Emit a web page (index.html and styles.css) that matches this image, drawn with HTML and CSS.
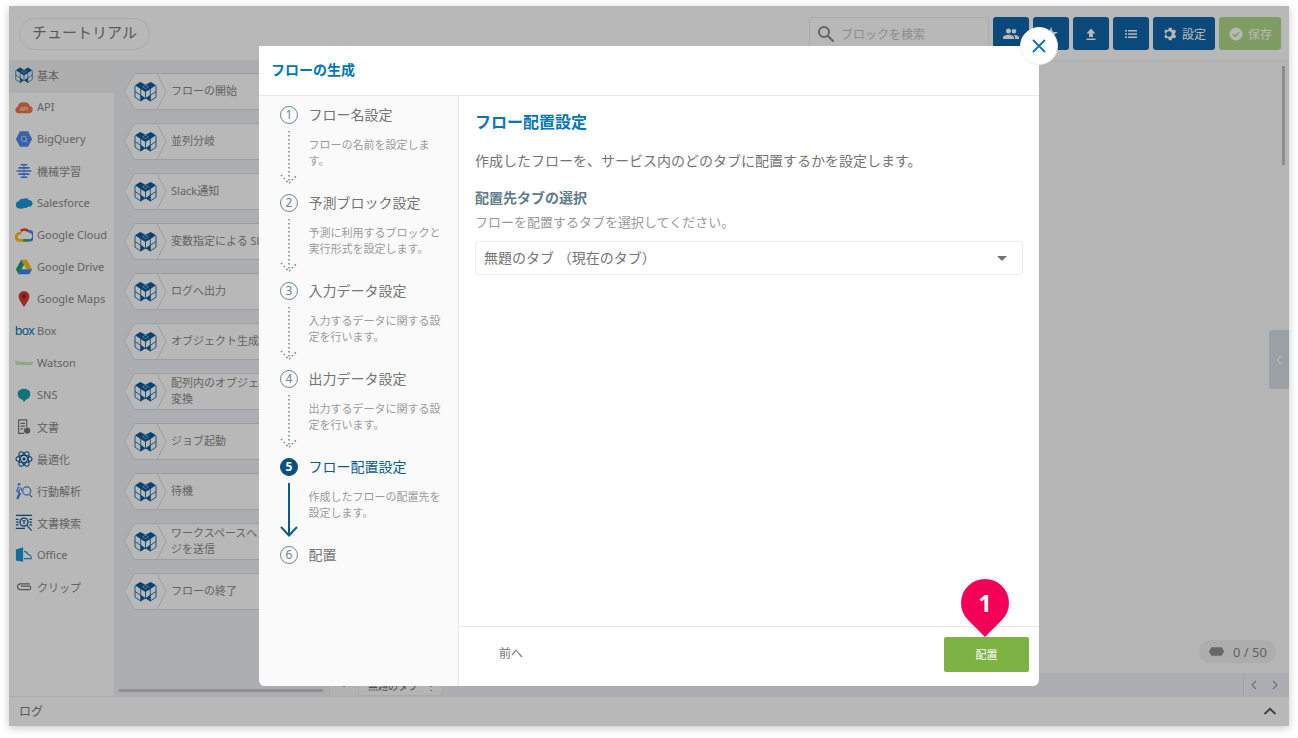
FILE: index.html
```html
<!DOCTYPE html>
<html lang="ja">
<head>
<meta charset="utf-8">
<title>フローの生成</title>
<link rel="stylesheet" href="styles.css">
</head>
<body>
<svg class="defs" width="0" height="0">
  <symbol id="cube" viewBox="0 0 24 22">
    <path d="M1 5v12l6 4v-9M23 5v12l-6 4v-9M1 11l6 4M23 11l-6 4M7 8v4M17 8v4M12 10v9" fill="none" stroke="#1f6ea6" stroke-width="1"/>
    <path d="M1 4.500L6.500 1l5.500 3 5.500-3L23 4.500 17.500 8 12 11.500 6.500 8z" fill="#0b5c9c"/>
    <path d="M12 4l-3 2 3 2 3-2z" fill="#0b5c9c" stroke="#fff" stroke-width=".5"/>
    <path d="M7 14.500l5 3.500-5 3.500zM17 14.500L12 18l5 3.500z" fill="#0b5c9c"/>
  </symbol>
</svg>
<div class="app">
  <header class="topbar">
    <div class="title-pill">チュートリアル</div>
    <div class="top-actions">
      <div class="search">
        <svg class="search-icon" viewBox="0 0 18 18"><circle cx="7" cy="7" r="5" fill="none" stroke="#8a8a8a" stroke-width="2"/><path d="M11 11l5.500 5.500" stroke="#8a8a8a" stroke-width="2.200"/></svg>
        <span>ブロックを検索</span>
      </div>
      <button class="tbtn"><svg viewBox="0 0 16 16" class="ico"><path d="M5.500 7.500a2.500 2.500 0 1 0 0-5 2.500 2.500 0 0 0 0 5zm5.500 0a2.300 2.300 0 1 0 0-4.600 2.300 2.300 0 0 0 0 4.600zM0 13v-1.500C0 9.800 3.500 8.800 5.500 8.800s5.500 1 5.500 2.700V13zm12 0v-1.500c0-1-.5-1.800-1.300-2.500 2 0 5.300.8 5.300 2.500V13z" fill="#fff"/></svg></button>
      <button class="tbtn"><svg viewBox="0 0 16 16" class="ico"><path d="M8 1l2 5h5l-4 3 1.500 5L8 11l-4.500 3L5 9 1 6h5z" fill="#fff"/></svg></button>
      <button class="tbtn"><svg viewBox="0 0 16 16" class="ico"><path d="M8 2.500l4.500 5H10V11H6V7.500H3.500zM3.500 12.500h9V14h-9z" fill="#fff"/></svg></button>
      <button class="tbtn"><svg viewBox="0 0 16 16" class="ico"><path d="M2 4h2v1.500H2zM5 4h9v1.500H5zM2 7.250h2v1.500H2zM5 7.250h9v1.500H5zM2 10.500h2V12H2zM5 10.500h9V12H5z" fill="#fff"/></svg></button>
      <button class="tbtn wide"><svg viewBox="0 0 16 16" class="ico"><path d="M8 5.300a2.700 2.700 0 1 0 0 5.400 2.700 2.700 0 0 0 0-5.400zm5.800 3.600l1.400 1.100-1.400 2.500-1.700-.7c-.4.300-.8.500-1.200.7L10.600 14.300H7.800l-.3-1.800c-.4-.2-.8-.4-1.200-.7l-1.700.7L3.200 10l1.400-1.100a5 5 0 0 1 0-1.800L3.200 6l1.400-2.500 1.700.7c.4-.3.800-.5 1.200-.7l.3-1.800h2.800l.3 1.800c.4.200.8.400 1.200.7l1.700-.7L15.200 6l-1.400 1.100c.1.600.1 1.200 0 1.800z" fill="#fff" transform="translate(-1)"/></svg><span>設定</span></button>
      <button class="tbtn wide save"><svg viewBox="0 0 16 16" class="ico"><circle cx="8" cy="8" r="6.500" fill="#fff"/><path d="M4.800 8l2.300 2.300 4-4" fill="none" stroke="#b0d989" stroke-width="1.600"/></svg><span>保存</span></button>
    </div>
  </header>
  <div class="main">
    <nav class="side">
      <div class="cat active"><svg class="cat-ico" viewBox="0 0 24 22"><use href="#cube"/></svg><span>基本</span></div>
      <div class="cat"><svg class="cat-ico" viewBox="0 0 20 16"><path d="M4 15a3.800 3.800 0 0 1-1-7.400A5.500 5.500 0 0 1 10 3a5 5 0 0 1 6.500 3.800A4.200 4.200 0 0 1 16 15z" fill="#f2734a"/><text class="api-t" x="10" y="13">API</text></svg><span>API</span></div>
      <div class="cat"><svg class="cat-ico" viewBox="0 0 20 20"><path d="M5.500 1.500h9L19 10l-4.500 8.500h-9L1 10z" fill="#5085ee"/><circle cx="9.800" cy="9.800" r="3" fill="none" stroke="#d6e4ff" stroke-width="1"/><path d="M12 12l2 2" stroke="#d6e4ff"/></svg><span>BigQuery</span></div>
      <div class="cat"><svg class="cat-ico" viewBox="0 0 20 20"><path d="M7 3h6M4.500 6.500h11M2.500 10h15M4.500 13.500h11M7 17h6" fill="none" stroke="#4a80e8" stroke-width="1.800" stroke-linecap="round"/><path d="M10 2v16" stroke="#4a80e8" stroke-width="1"/></svg><span>機械学習</span></div>
      <div class="cat"><svg class="cat-ico" viewBox="0 0 20 14"><path d="M5 13C2.500 13 1 11.500 1 9.500 .5 7 2 5.500 4 5c1-2 3.500-3.500 5.500-2.500C11 1.500 14 1.500 15 3.500c3 .2 4.500 2 4.500 4 0 2.500-2 4-4.500 3.500-1 1.500-3 2-4.500 1.200C9 13.500 6.500 13.800 5 13z" fill="#1798d8"/></svg><span>Salesforce</span></div>
      <div class="cat"><svg class="cat-ico" viewBox="0 0 20 16"><path d="M6.500 3.500A5.800 5.800 0 0 1 15 4" fill="none" stroke="#ea4335" stroke-width="3"/><path d="M15 4a5 5 0 0 1 1 10" fill="none" stroke="#4285f4" stroke-width="3"/><path d="M16 14H9" stroke="#34a853" stroke-width="3"/><path d="M9 14H5A3.800 3.800 0 0 1 3 7a4 4 0 0 1 4-1" fill="none" stroke="#fbbc05" stroke-width="3"/></svg><span>Google Cloud</span></div>
      <div class="cat"><svg class="cat-ico" viewBox="0 0 20 18"><path d="M7 1h6l6 10.500h-6z" fill="#fbbc05"/><path d="M7 1l3 5.500L4 17 1 11.500z" fill="#1aa260"/><path d="M6.500 11.500H19L16 17H3.800z" fill="#4285f4"/></svg><span>Google Drive</span></div>
      <div class="cat"><svg class="cat-ico" viewBox="0 0 20 20"><path d="M10 1a6 6 0 0 0-6 6c0 4 6 12 6 12s6-8 6-12a6 6 0 0 0-6-6z" fill="#d93a32"/><circle cx="10" cy="7" r="2.200" fill="#8c2420"/></svg><span>Google Maps</span></div>
      <div class="cat"><span class="box-logo">box</span><span>Box</span></div>
      <div class="cat"><span class="watson-logo">Watson</span><span>Watson</span></div>
      <div class="cat"><svg class="cat-ico" viewBox="0 0 20 20"><path d="M10 3c4.500 0 7 2.500 7 6s-2.500 6-5 6.300L10 18l-1.500-2.700C5.500 15 3 12.500 3 9s2.500-6 7-6z" fill="#15a0a8"/></svg><span>SNS</span></div>
      <div class="cat"><svg class="cat-ico" viewBox="0 0 20 20"><path d="M4 2h9v8M4 2v15h6M6 6h5M6 9h5M6 12h3" fill="none" stroke="#777" stroke-width="1.300"/><circle cx="13.500" cy="14" r="3.500" fill="#777"/></svg><span>文書</span></div>
      <div class="cat"><svg class="cat-ico" viewBox="0 0 20 20"><g fill="none" stroke="#0f5c9a" stroke-width="1.200"><ellipse cx="10" cy="10" rx="9" ry="4"/><ellipse cx="10" cy="10" rx="9" ry="4" transform="rotate(60 10 10)"/><ellipse cx="10" cy="10" rx="9" ry="4" transform="rotate(120 10 10)"/></g><circle cx="10" cy="10" r="1.800" fill="#0f5c9a"/></svg><span>最適化</span></div>
      <div class="cat"><svg class="cat-ico" viewBox="0 0 20 20"><circle cx="4.500" cy="2.500" r="1.500" fill="#4a80e8"/><path d="M4 5L2 10l4 3-3 6M5 8l-1 6-2 5M6 6l2 4" fill="none" stroke="#4a80e8" stroke-width="1.400"/><circle cx="13" cy="10" r="4.500" fill="none" stroke="#4a80e8" stroke-width="1.300"/><path d="M16 14l3 3" stroke="#4a80e8" stroke-width="1.400"/></svg><span>行動解析</span></div>
      <div class="cat"><svg class="cat-ico" viewBox="0 0 20 20"><path d="M1 1.500h18M1 16h10M1 6h3M16 6h3M1 9h3M16 9h3M1 12h3M16 12h3" stroke="#0f5c9a" stroke-width="1.500"/><circle cx="10" cy="9" r="4.500" fill="none" stroke="#0f5c9a" stroke-width="1.500"/><path d="M8 7.500h4M10 7.500v4M13.500 13l5 5.500" stroke="#0f5c9a" stroke-width="1.300"/></svg><span>文書検索</span></div>
      <div class="cat"><svg class="cat-ico" viewBox="0 0 20 20"><path d="M1 4l8-2.500v16L1 16z" fill="#1798d8"/><path d="M10 6c3 0 4 2 4.500 3.500C17 10 18.500 11.500 18 14H10" fill="none" stroke="#1798d8" stroke-width="1.200"/></svg><span>Office</span></div>
      <div class="cat"><svg class="cat-ico" viewBox="0 0 20 14"><path d="M17 4H6a3.300 3.300 0 0 0 0 6.500h10a2 2 0 0 0 0-4H7" fill="none" stroke="#777" stroke-width="1.300" transform="translate(-.5 -.5)"/></svg><span>クリップ</span></div>
    </nav>
    <section class="palette">
      <div class="tiles">
        <div class="tile"><svg class="hex" viewBox="0 0 33 37"><path class="hex-shape" d="M.5 18.500L10.500.5h22.500l9 18-9 18H10.500z"/><use href="#cube" x="10" y="8" width="23" height="21"/></svg><div class="tile-label"><span>フローの開始</span></div></div>
        <div class="tile"><svg class="hex" viewBox="0 0 33 37"><path class="hex-shape" d="M.5 18.500L10.500.5h22.500l9 18-9 18H10.500z"/><use href="#cube" x="10" y="8" width="23" height="21"/></svg><div class="tile-label"><span>並列分岐</span></div></div>
        <div class="tile"><svg class="hex" viewBox="0 0 33 37"><path class="hex-shape" d="M.5 18.500L10.500.5h22.500l9 18-9 18H10.500z"/><use href="#cube" x="10" y="8" width="23" height="21"/></svg><div class="tile-label"><span>Slack通知</span></div></div>
        <div class="tile"><svg class="hex" viewBox="0 0 33 37"><path class="hex-shape" d="M.5 18.500L10.500.5h22.500l9 18-9 18H10.500z"/><use href="#cube" x="10" y="8" width="23" height="21"/></svg><div class="tile-label"><span>変数指定による Slack通知</span></div></div>
        <div class="tile"><svg class="hex" viewBox="0 0 33 37"><path class="hex-shape" d="M.5 18.500L10.500.5h22.500l9 18-9 18H10.500z"/><use href="#cube" x="10" y="8" width="23" height="21"/></svg><div class="tile-label"><span>ログへ出力</span></div></div>
        <div class="tile"><svg class="hex" viewBox="0 0 33 37"><path class="hex-shape" d="M.5 18.500L10.500.5h22.500l9 18-9 18H10.500z"/><use href="#cube" x="10" y="8" width="23" height="21"/></svg><div class="tile-label"><span>オブジェクト生成</span></div></div>
        <div class="tile"><svg class="hex" viewBox="0 0 33 37"><path class="hex-shape" d="M.5 18.500L10.500.5h22.500l9 18-9 18H10.500z"/><use href="#cube" x="10" y="8" width="23" height="21"/></svg><div class="tile-label"><span>配列内のオブジェクトを<br>変換</span></div></div>
        <div class="tile"><svg class="hex" viewBox="0 0 33 37"><path class="hex-shape" d="M.5 18.500L10.500.5h22.500l9 18-9 18H10.500z"/><use href="#cube" x="10" y="8" width="23" height="21"/></svg><div class="tile-label"><span>ジョブ起動</span></div></div>
        <div class="tile"><svg class="hex" viewBox="0 0 33 37"><path class="hex-shape" d="M.5 18.500L10.500.5h22.500l9 18-9 18H10.500z"/><use href="#cube" x="10" y="8" width="23" height="21"/></svg><div class="tile-label"><span>待機</span></div></div>
        <div class="tile"><svg class="hex" viewBox="0 0 33 37"><path class="hex-shape" d="M.5 18.500L10.500.5h22.500l9 18-9 18H10.500z"/><use href="#cube" x="10" y="8" width="23" height="21"/></svg><div class="tile-label"><span>ワークスペースへメッセー<br>ジを送信</span></div></div>
        <div class="tile"><svg class="hex" viewBox="0 0 33 37"><path class="hex-shape" d="M.5 18.500L10.500.5h22.500l9 18-9 18H10.500z"/><use href="#cube" x="10" y="8" width="23" height="21"/></svg><div class="tile-label"><span>フローの終了</span></div></div>
      </div>
      <div class="pal-scroll"></div>
    </section>
    <section class="canvas-wrap">
      <div class="canvas">
        <div class="v-scroll"></div>
        <div class="handle"><svg viewBox="0 0 8 10" class="handle-ico"><path d="M6 1L2 5l4 4" fill="none" stroke="#fff" stroke-width="1.200"/></svg></div>
        <div class="counter"><svg viewBox="0 0 20 12" class="counter-ico"><path d="M4 1h12l3 5-3 5H4L1 6z" fill="#8f8f8f"/></svg><span>0 / 50</span></div>
      </div>
      <div class="tabbar">
        <div class="tab-add">+</div>
        <div class="tab">無題のタブ<span class="tab-menu">⋮</span></div>
        <div class="tab-fill"></div>
        <div class="tab-nav"><svg viewBox="0 0 8 10"><path d="M6 1L2 5l4 4" fill="none" stroke="#999" stroke-width="1.100"/></svg><svg viewBox="0 0 8 10"><path d="M2 1l4 4-4 4" fill="none" stroke="#999" stroke-width="1.100"/></svg></div>
      </div>
    </section>
  </div>
  <footer class="logbar"><span>ログ</span><svg viewBox="0 0 14 8" class="log-chev"><path d="M1.500 7L7 1.800 12.500 7" fill="none" stroke="#fff" stroke-width="2"/></svg></footer>

  <div class="overlay">
    <div class="modal">
      <button class="close"><svg viewBox="0 0 16 16"><path d="M2 2l12 12M14 2L2 14" stroke="#0277bd" stroke-width="1.800"/></svg></button>
      <div class="modal-head">フローの生成</div>
      <div class="modal-body">
        <ol class="steps">
          <li class="step">
            <div class="rail"><span class="num">1</span><svg class="dots" viewBox="0 0 20 56"><path d="M10 1v52" stroke="#6e8795" stroke-width="1.500" stroke-dasharray="1.500 2.500" fill="none"/><path d="M2 45l8 8.500 8-8.500" stroke="#6e8795" stroke-width="1.500" stroke-dasharray="1.500 2.500" fill="none"/></svg></div>
            <div class="step-text"><div class="step-title">フロー名設定</div><p class="step-desc">フローの名前を設定します。</p></div>
          </li>
          <li class="step">
            <div class="rail"><span class="num">2</span><svg class="dots" viewBox="0 0 20 56"><path d="M10 1v52" stroke="#6e8795" stroke-width="1.500" stroke-dasharray="1.500 2.500" fill="none"/><path d="M2 45l8 8.500 8-8.500" stroke="#6e8795" stroke-width="1.500" stroke-dasharray="1.500 2.500" fill="none"/></svg></div>
            <div class="step-text"><div class="step-title">予測ブロック設定</div><p class="step-desc">予測に利用するブロックと実行形式を設定します。</p></div>
          </li>
          <li class="step">
            <div class="rail"><span class="num">3</span><svg class="dots" viewBox="0 0 20 56"><path d="M10 1v52" stroke="#6e8795" stroke-width="1.500" stroke-dasharray="1.500 2.500" fill="none"/><path d="M2 45l8 8.500 8-8.500" stroke="#6e8795" stroke-width="1.500" stroke-dasharray="1.500 2.500" fill="none"/></svg></div>
            <div class="step-text"><div class="step-title">入力データ設定</div><p class="step-desc">入力するデータに関する設定を行います。</p></div>
          </li>
          <li class="step">
            <div class="rail"><span class="num">4</span><svg class="dots" viewBox="0 0 20 56"><path d="M10 1v52" stroke="#6e8795" stroke-width="1.500" stroke-dasharray="1.500 2.500" fill="none"/><path d="M2 45l8 8.500 8-8.500" stroke="#6e8795" stroke-width="1.500" stroke-dasharray="1.500 2.500" fill="none"/></svg></div>
            <div class="step-text"><div class="step-title">出力データ設定</div><p class="step-desc">出力するデータに関する設定を行います。</p></div>
          </li>
          <li class="step current">
            <div class="rail"><span class="num">5</span><svg class="dots" viewBox="0 0 20 56"><path d="M10 1v52M2 45l8 8.500 8-8.500" stroke="#0b5a96" stroke-width="2" fill="none"/></svg></div>
            <div class="step-text"><div class="step-title">フロー配置設定</div><p class="step-desc">作成したフローの配置先を設定します。</p></div>
          </li>
          <li class="step">
            <div class="rail"><span class="num">6</span></div>
            <div class="step-text"><div class="step-title">配置</div></div>
          </li>
        </ol>
        <div class="pane">
          <div class="pane-main">
            <h2 class="pane-title">フロー配置設定</h2>
            <p class="pane-desc">作成したフローを、サービス内のどのタブに配置するかを設定します。</p>
            <h3 class="field-label">配置先タブの選択</h3>
            <p class="field-help">フローを配置するタブを選択してください。</p>
            <div class="select"><span>無題のタブ （現在のタブ）</span><i class="caret"></i></div>
          </div>
          <div class="pane-foot">
            <button class="prev">前へ</button>
            <button class="deploy">配置<span class="pin"><span class="pin-num">1</span></span></button>
          </div>
        </div>
      </div>
    </div>
  </div>
</div>
</body>
</html>
```
FILE: styles.css
```css
* { box-sizing: border-box; }
html, body { margin: 0; height: 738px; overflow: hidden; background: #fff; }
body {
  padding: 6px 9px;
  font-family: "Noto Sans", "Noto Sans CJK JP", sans-serif;
  color: #808080;
}
.defs { position: absolute; }
button { font: inherit; border: 0; padding: 0; cursor: pointer; }

.app {
  position: relative;
  width: 1280px;
  height: 720px;
  display: flex;
  flex-direction: column;
  background: #fff;
  box-shadow: 0 2px 8px rgba(0, 0, 0, .22);
  overflow: hidden;
}

/* top bar */
.topbar {
  height: 55px;
  flex: none;
  display: flex;
  align-items: flex-start;
  justify-content: space-between;
  padding: 11px 8px 0 10px;
  border-bottom: 1px solid #f2f2f2;
}
.title-pill {
  width: 131px;
  height: 32px;
  margin-top: 1px;
  border: 1px solid #ececec;
  border-radius: 16px;
  font-size: 15px;
  line-height: 27px;
  text-align: center;
  color: #7c7c7c;
}
.top-actions { display: flex; gap: 4px; }
.search {
  width: 180px;
  height: 33px;
  border: 1px solid #ededed;
  border-radius: 3px;
  display: flex;
  align-items: center;
  padding-left: 7px;
  gap: 6px;
  font-size: 12px;
  color: #c4c4c4;
}
.search-icon { width: 18px; height: 18px; }
.tbtn {
  width: 36px;
  height: 33px;
  background: #0f67ab;
  border-radius: 3px;
  display: flex;
  align-items: center;
  justify-content: center;
  gap: 4px;
  color: #fff;
  font-size: 12px;
}
.tbtn.wide { width: 62px; }
.tbtn.save { background: #b0d989; }
.ico { width: 16px; height: 16px; }

/* main */
.main { flex: 1; display: flex; min-height: 0; }
.side { width: 106px; flex: none; border-right: 1px solid #f0f0f0; }
.cat {
  height: 32px;
  display: flex;
  align-items: center;
  gap: 4px;
  padding: 0 0 5px 6px;
  font-size: 11px;
  color: #8a8a8a;
}
.cat.active { background: #f2f2f2; }
.cat-ico { width: 18px; height: 18px; flex: none; }
.api-t { font-size: 6px; fill: #fff; text-anchor: middle; font-family: "Liberation Sans", sans-serif; }
.box-logo { width: 18px; flex: none; font: 400 13px/1 "Liberation Sans", sans-serif; color: #0f72bd; letter-spacing: -.6px; }
.watson-logo { width: 18px; flex: none; font-size: 5.500px; color: #8ec63f; white-space: nowrap; overflow: hidden; }

.palette {
  width: 214px;
  flex: none;
  position: relative;
  background: #f0f2f5;
  padding-top: 12px;
  padding-left: 9px;
  display: flex;
  flex-direction: column;
}
.tiles { flex: 1; display: flex; flex-direction: column; gap: 13px; }
.tile { display: flex; height: 37px; width: 203px; }
.hex { width: 33px; height: 37px; flex: none; overflow: visible; position: relative; z-index: 1; }
.hex-shape { fill: #fff; stroke: #dcdcdc; }
.tile-label {
  width: 170px;
  height: 37px;
  background: #fff;
  border-top: 1px solid #dcdcdc;
  border-bottom: 1px solid #dcdcdc;
  padding: 0 0 1px 14px;
  display: flex;
  align-items: center;
  font-size: 11px;
  line-height: 16px;
  color: #8a8a8a;
  white-space: nowrap;
  overflow: hidden;
}
.pal-scroll {
  width: 204px;
  height: 3px;
  margin: 0 0 4px -5px;
  background: #c6c6c6;
}

.canvas-wrap { flex: 1; min-width: 0; display: flex; flex-direction: column; background: #fbfbfb; }
.canvas { flex: 1; position: relative; }
.v-scroll {
  position: absolute;
  right: 4px;
  top: 5px;
  width: 3px;
  height: 99px;
  background: #c4c4c4;
}
.handle {
  position: absolute;
  right: 0;
  top: 269px;
  width: 20px;
  height: 59px;
  background: #d4e0e8;
  border-radius: 3px 0 0 3px;
  display: flex;
  align-items: center;
  justify-content: center;
}
.handle-ico { width: 8px; height: 10px; }
.counter {
  position: absolute;
  right: 13px;
  bottom: 10px;
  width: 77px;
  height: 23px;
  border-radius: 12px;
  background: #f0f0f0;
  display: flex;
  align-items: center;
  gap: 8px;
  padding-left: 9px;
  font-size: 13px;
  color: #888;
}
.counter-ico { width: 17px; height: 11px; }
.tabbar { height: 23px; flex: none; display: flex; background: #f0f2f5; font-size: 9px; }
.tab-add { width: 29px; background: #f7f7f7; border-left: 1px solid #ebebeb; text-align: center; line-height: 20px; font-size: 13px; color: #666; }
.tab { width: 84px; background: #fbfbfb; border: 1px solid #ebebeb; padding: 4px 0 0 9px; font-size: 10px; white-space: nowrap; color: #666; }
.tab-menu { margin-left: 8px; }
.tab-fill { flex: 1; }
.tab-nav { width: 42px; margin-right: 4px; border-left: 1px solid #e4e4e4; display: flex; align-items: center; justify-content: space-around; }
.tab-nav svg { width: 8px; height: 10px; }

.logbar {
  height: 30px;
  flex: none;
  border-top: 1px solid #f0f0f0;
  display: flex;
  align-items: center;
  justify-content: space-between;
  padding: 0 12px 2px 10px;
  font-size: 12px;
  color: #7c7c7c;
  background: #fff;
}
.log-chev { width: 14px; height: 8px; }
.log-chev path { stroke: #5a5a5a; }

/* modal */
.overlay {
  position: absolute;
  inset: 0;
  z-index: 2;
  background: rgba(0, 0, 0, .28);
  display: flex;
  align-items: center;
  justify-content: center;
}
.modal {
  position: relative;
  width: 780px;
  height: 640px;
  background: #fff;
  border-radius: 0 0 6px 6px;
  display: flex;
  flex-direction: column;
}
.close {
  position: absolute;
  right: -19px;
  top: -19px;
  width: 38px;
  height: 38px;
  border-radius: 50%;
  background: #fff;
  border: 1px solid #eee;
  display: flex;
  align-items: center;
  justify-content: center;
}
.close svg { width: 16px; height: 16px; }
.modal-head {
  height: 50px;
  flex: none;
  border-bottom: 1px solid #e8e8e8;
  padding-left: 12px;
  font-size: 14px;
  font-weight: 700;
  line-height: 48px;
  color: #0277bd;
}
.modal-body { flex: 1; display: flex; min-height: 0; }
.steps {
  width: 200px;
  flex: none;
  margin: 0;
  padding: 9px 0 0 21px;
  list-style: none;
  background: #fafafa;
  border-right: 1px solid #e8e8e8;
  border-radius: 0 0 0 6px;
}
.step { height: 88px; display: flex; gap: 10.500px; }
.rail { width: 18px; flex: none; display: flex; flex-direction: column; align-items: center; }
.num {
  width: 18px;
  height: 18px;
  margin-top: 1px;
  border: 1px solid #6e8795;
  border-radius: 50%;
  font-size: 12px;
  line-height: 16px;
  text-align: center;
  color: #6e8795;
  flex: none;
}
.dots { width: 20px; height: 56px; margin-top: 6px; flex: none; }
.step-title { font-size: 14px; line-height: 20px; color: #757575; white-space: nowrap; }
.step-desc { margin: 11.500px 0 0; width: 135px; font-size: 11px; line-height: 16px; color: #9a9a9a; }
.current .num { background: #0b4f86; border-color: #0b4f86; color: #fff; font-weight: 700; }
.current .step-title { color: #0b5a96; }

.pane { flex: 1; display: flex; flex-direction: column; min-width: 0; }
.pane-main { flex: 1; padding: 15px 16px 0; }
.pane-title { margin: 0; font-size: 16px; line-height: 22px; font-weight: 700; color: #0277bd; }
.pane-desc { margin: 18px 0 0; font-size: 14px; line-height: 20px; color: #757575; }
.field-label { margin: 17px 0 0; font-size: 14px; line-height: 20px; font-weight: 700; color: #607d8b; }
.field-help { margin: 5px 0 0; font-size: 13px; line-height: 18px; color: #9a9a9a; }
.select {
  margin-top: 10px;
  height: 34px;
  border: 1px solid #ececec;
  border-radius: 3px;
  display: flex;
  align-items: center;
  justify-content: space-between;
  padding: 0 15px 3px 8px;
  font-size: 14px;
  color: #757575;
}
.caret { width: 0; height: 0; margin-top: 3px; border: 5px solid transparent; border-top-color: #757575; border-bottom: 0; }
.pane-foot {
  height: 60px;
  flex: none;
  border-top: 1px solid #e8e8e8;
  display: flex;
  justify-content: space-between;
  align-items: flex-start;
  padding: 10px 10px 0 18px;
}
.prev { width: 68px; height: 31px; background: none; font-size: 12px; color: #757575; text-align: center; }
.deploy {
  position: relative;
  width: 85px;
  height: 35px;
  padding-bottom: 2px;
  background: #7cb342;
  border-radius: 2px;
  color: #fff;
  font-size: 11px;
}
.pin {
  position: absolute;
  left: 17px;
  top: -58px;
  width: 48px;
  height: 48px;
}
.pin::before {
  content: "";
  position: absolute;
  inset: 0;
  border-radius: 50% 50% 0 50%;
  background: #f50057;
  transform: rotate(45deg);
}
.pin-num {
  position: absolute;
  inset: 0;
  text-align: center;
  font-size: 23px;
  line-height: 48px;
  font-weight: 700;
  color: #fff;
}
```
